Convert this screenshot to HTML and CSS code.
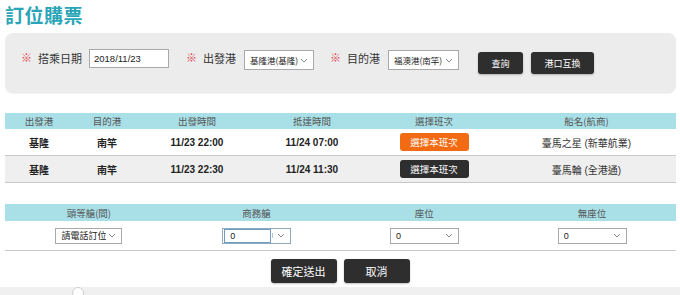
FILE: index.html
```html
<!DOCTYPE html>
<html lang="zh-Hant">
<head>
    <meta charset="UTF-8">
    <meta name="viewport" content="width=device-width, initial-scale=1.0">
    <title>訂位購票</title>
    <link rel="stylesheet" href="styles.css">
</head>
<body>
    <h1 class="title">訂位購票</h1>

    <div class="search">
        <span class="star">※</span>
        <label class="lbl lbl-date" for="date">搭乘日期</label>
        <input type="text" id="date" class="date" value="2018/11/23">

        <span class="star">※</span>
        <label class="lbl">出發港</label>
        <span class="sel sel-port">
            <select><option>基隆港(基隆)</option></select>
            <svg class="arr" width="8" height="5" viewBox="0 0 8 5"><path d="M1 1l3 3 3-3" fill="none" stroke="#888" stroke-width="1"/></svg>
        </span>

        <span class="star">※</span>
        <label class="lbl">目的港</label>
        <span class="sel sel-port sel-dest">
            <select><option>福澳港(南竿)</option></select>
            <svg class="arr" width="8" height="5" viewBox="0 0 8 5"><path d="M1 1l3 3 3-3" fill="none" stroke="#888" stroke-width="1"/></svg>
        </span>

        <button class="btn btn-query">查詢</button>
        <button class="btn btn-swap">港口互換</button>
    </div>

    <table class="grid trips">
        <colgroup>
            <col style="width:68px"><col style="width:68px"><col style="width:112px">
            <col style="width:118px"><col style="width:126px"><col style="width:179px">
        </colgroup>
        <thead>
            <tr>
                <th>出發港</th><th>目的港</th><th>出發時間</th><th>抵達時間</th><th>選擇班次</th><th>船名(航商)</th>
            </tr>
        </thead>
        <tbody>
            <tr>
                <td class="b">基隆</td><td class="b">南竿</td>
                <td class="b">11/23 22:00</td><td class="b">11/24 07:00</td>
                <td><button class="pick pick-on">選擇本班次</button></td>
                <td>臺馬之星 (新華航業)</td>
            </tr>
            <tr class="alt">
                <td class="b">基隆</td><td class="b">南竿</td>
                <td class="b">11/23 22:30</td><td class="b">11/24 11:30</td>
                <td><button class="pick">選擇本班次</button></td>
                <td>臺馬輪 (全港通)</td>
            </tr>
        </tbody>
    </table>

    <table class="grid seats">
        <thead>
            <tr><th>頭等艙(間)</th><th>商務艙</th><th>座位</th><th>無座位</th></tr>
        </thead>
        <tbody>
            <tr>
                <td>
                    <span class="sel sel-phone">
                        <select><option>請電話訂位</option></select>
                        <svg class="arr" width="8" height="5" viewBox="0 0 8 5"><path d="M1 1l3 3 3-3" fill="none" stroke="#888" stroke-width="1"/></svg>
                    </span>
                </td>
                <td>
                    <span class="sel sel-num sel-focus">
                        <select><option>0</option></select>
                        <svg class="arr" width="8" height="5" viewBox="0 0 8 5"><path d="M1 1l3 3 3-3" fill="none" stroke="#888" stroke-width="1"/></svg>
                    </span>
                </td>
                <td>
                    <span class="sel sel-num">
                        <select><option>0</option></select>
                        <svg class="arr" width="8" height="5" viewBox="0 0 8 5"><path d="M1 1l3 3 3-3" fill="none" stroke="#888" stroke-width="1"/></svg>
                    </span>
                </td>
                <td>
                    <span class="sel sel-num">
                        <select><option>0</option></select>
                        <svg class="arr" width="8" height="5" viewBox="0 0 8 5"><path d="M1 1l3 3 3-3" fill="none" stroke="#888" stroke-width="1"/></svg>
                    </span>
                </td>
            </tr>
        </tbody>
    </table>

    <div class="actions">
        <button class="btn btn-big">確定送出</button>
        <button class="btn btn-big">取消</button>
    </div>

    <div class="footer"><span class="knob"></span></div>
</body>
</html>
```

FILE: styles.css
```css
body {
    margin: 0;
    width: 680px;
    height: 295px;
    overflow: hidden;
    font-family: 'Liberation Sans', 'Noto Sans CJK TC', sans-serif;
    color: #333;
    background: #fff;
}
.title {
    margin: 0 0 0 5px;
    padding-top: 2px;
    font-family: 'Noto Sans CJK TC', sans-serif;
    font-size: 19px;
    line-height: 26px;
    font-weight: bold;
    color: #2aa5b8;
    letter-spacing: 0.5px;
}

/* search bar */
.search {
    display: flex;
    align-items: flex-start;
    margin: 5px 4px 0 5px;
    height: 60px;
    box-sizing: border-box;
    padding: 16px 0 0 16px;
    background: #ececec;
    border-radius: 8px;
    box-shadow: 0 1px 1px rgba(0, 0, 0, 0.06);
}
.star {
    color: #e0434c;
    font-size: 11px;
    line-height: 19px;
    margin-right: 6px;
    width: 11px;
}
.lbl {
    font-family: 'Noto Sans CJK TC', sans-serif;
    font-size: 11px;
    line-height: 19px;
    color: #333;
    margin-right: 8px;
}
.lbl-date {
    margin-right: 7px;
}
.date {
    width: 80px;
    height: 19px;
    box-sizing: border-box;
    border: 1px solid #a9a9a9;
    padding: 0 4px;
    font-family: 'Liberation Sans', sans-serif;
    font-size: 9.5px;
    color: #222;
    margin-right: 17px;
}

.sel {
    display: inline-flex;
    align-items: center;
    background: #fff;
    border: 1px solid #a9a9a9;
    box-sizing: border-box;
}
.sel select {
    appearance: none;
    -webkit-appearance: none;
    border: none;
    background: transparent;
    outline: none;
    font-family: 'Noto Sans CJK TC', sans-serif;
    font-size: 8.5px;
    color: #222;
    padding: 0 0 0 5px;
    height: 100%;
    flex: 1;
    min-width: 0;
}
.sel .arr {
    flex: none;
    margin: 0 5px 0 2px;
}
.sel-port {
    width: 70px;
    height: 20px;
    margin-top: 1px;
    margin-right: 16px;
}
.sel-dest {
    width: 71px;
    margin-right: 19px;
}

.btn {
    border: none;
    background: #2e2e2e;
    color: #fff;
    border-radius: 3px;
    font-family: 'Noto Sans CJK TC', sans-serif;
    font-size: 9px;
    height: 22px;
    padding: 0;
    box-shadow: 0 1px 2px rgba(0, 0, 0, 0.25);
    cursor: pointer;
}
.btn-query {
    width: 45px;
    margin-top: 3px;
    margin-right: 8px;
}
.btn-swap {
    width: 63px;
    margin-top: 3px;
}

/* tables */
.grid {
    width: 671px;
    margin-left: 5px;
    border-collapse: collapse;
    table-layout: fixed;
    font-size: 10px;
}
.grid th {
    background: #a9e0e7;
    font-family: 'Noto Sans CJK TC', sans-serif;
    font-weight: normal;
    color: #555;
    font-size: 9.5px;
    padding: 0;
}
.grid td {
    text-align: center;
    padding: 0;
    border-bottom: 1px solid #c8c8c8;
    font-family: 'Liberation Sans', 'Noto Sans CJK TC', sans-serif;
    color: #333;
}
.trips {
    margin-top: 20px;
}
.trips th {
    height: 16px;
}
.trips td {
    height: 26px;
}
.trips td.b {
    font-weight: bold;
    font-size: 10px;
    color: #222;
}
.trips .alt td {
    background: #efefef;
}
.pick {
    width: 69px;
    height: 18px;
    border: none;
    border-radius: 3px;
    background: #2e2e2e;
    color: #fff;
    font-family: 'Noto Sans CJK TC', sans-serif;
    font-size: 9.5px;
    padding: 0;
    vertical-align: middle;
}
.pick-on {
    background: #f26b12;
}

.seats {
    margin-top: 21px;
}
.seats th {
    height: 17px;
}
.seats td {
    height: 29px;
}
.sel-phone {
    width: 67px;
    height: 16px;
}
.sel-phone select {
    font-size: 9px;
}
.sel-num {
    width: 69px;
    height: 16px;
}
.sel-num select {
    font-family: 'Liberation Sans', sans-serif;
    font-size: 9px;
}
.sel-focus {
    border-color: #8fa9bf;
}
.sel-focus select {
    border: 1px solid #6f9cc4;
    height: 14px;
    box-sizing: border-box;
    margin: 0 1px;
}
.sel-focus .arr {
    border-left: 1px solid #b9c6d2;
    padding-left: 4px;
    margin-left: 0;
}

.actions {
    display: flex;
    justify-content: center;
    gap: 7px;
    margin-top: 8px;
}
.btn-big {
    width: 66px;
    height: 24px;
    font-size: 11px;
}

.footer {
    margin-top: 8px;
    height: 10px;
    background: #f0f0f0;
}
.knob {
    display: block;
    width: 12px;
    height: 12px;
    margin-left: 72px;
    margin-top: -4px;
    border: 1px solid #cfcfcf;
    border-radius: 50%;
    background: #fff;
    box-sizing: border-box;
}
```
